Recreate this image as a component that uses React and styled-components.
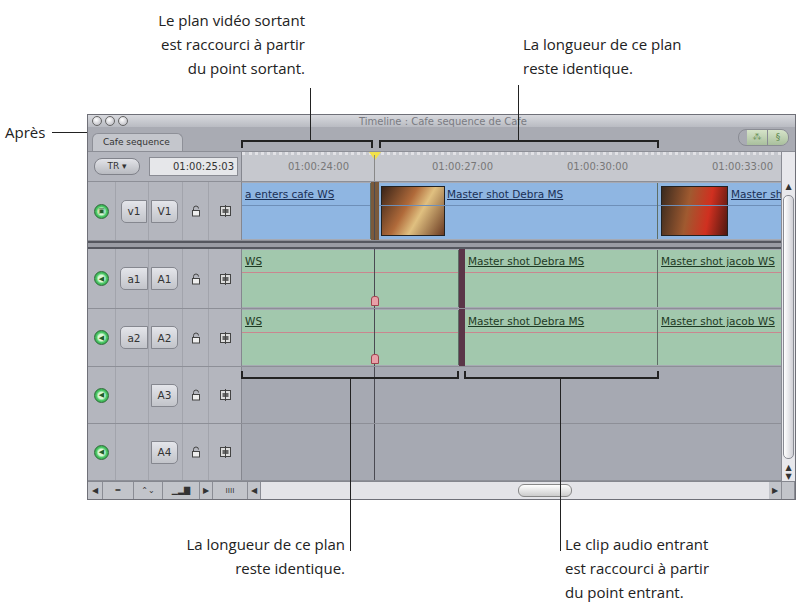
import React from 'react';
import styled, { createGlobalStyle } from 'styled-components';

const Global = createGlobalStyle`
  body { margin: 0; background: #fff; }
`;

const Page = styled.div`
  position: relative;
  width: 806px;
  height: 612px;
  padding: 114px 0 0 87px;
  box-sizing: border-box;
  font-family: "DejaVu Sans", Verdana, sans-serif;
`;

const Window = styled.div`
  width: 709px;
  height: 386px;
  background: #b6b8c0;
  border: 1px solid #6f7078;
  box-sizing: border-box;
  display: flex;
  flex-direction: column;
  overflow: hidden;
`;

const TitleBar = styled.div`
  height: 13px;
  display: flex;
  align-items: center;
  background: linear-gradient(#d8d9de, #b9bbc2);
  padding-left: 4px;
  gap: 3px;
`;
const Light = styled.span`
  width: 10px; height: 10px; border-radius: 50%;
  border: 1px solid #666; background: radial-gradient(circle at 40% 35%, #fff, #b0b0b8);
  box-sizing: border-box;
`;
const Title = styled.div`
  flex: 1; text-align: center; font-size: 10px; color: #7a7b82; margin-right: 40px;
`;

const TabRow = styled.div`
  height: 26px;
  display: flex;
  align-items: flex-end;
  justify-content: space-between;
  background: #a9abb3;
  padding: 0 6px 0 4px;
  border-bottom: 1px solid #8c8e96;
`;
const Tab = styled.div`
  height: 17px;
  padding: 0 12px 0 10px;
  font-size: 9px;
  line-height: 17px;
  color: #333;
  background: #c4c6cc;
  border: 1px solid #8e9098;
  border-bottom: none;
  border-radius: 6px 6px 0 0;
`;
const Toggles = styled.div`
  display: flex; margin-bottom: 5px;
  border: 1px solid #8a8c94; border-radius: 8px; overflow: hidden; height: 15px;
`;
const Toggle = styled.div`
  width: 20px; background: linear-gradient(#d6e4c9, #a9bf9d); border-left: 1px solid #8a8c94;
  color: #5f8a50; font-size: 9px; text-align: center; line-height: 15px;
  &:first-child { border-left: none; margin-left: 8px; }
`;

const Body = styled.div`
  flex: 1;
  display: flex;
`;
const Main = styled.div`
  width: 696px;
  display: flex;
  flex-direction: column;
`;
const Row = styled.div`
  height: ${p => p.h}px;
  display: flex;
  border-bottom: 1px solid #8d8f97;
  box-sizing: border-box;
`;
const Header = styled.div`
  width: 154px;
  display: grid;
  grid-template-columns: 28px 33px 34px 26px 33px;
  align-items: center;
  background: #b4b6be;
  border-right: 1px solid #85878f;
  box-sizing: border-box;
`;
const Cell = styled.div`
  height: 100%;
  display: flex; align-items: center; justify-content: center;
  border-right: 1px solid #a2a4ac;
`;
const Green = styled.span`
  width: 15px; height: 15px; border-radius: 50%;
  display: flex; align-items: center; justify-content: center;
  background: radial-gradient(circle, #d8f8d8 35%, #4cc866 55%, #23903c 95%);
  border: 1px solid #2f6f3a;
  box-sizing: border-box;
  font-size: 7px; color: #1f5f2a;
`;
const Patch = styled.div`
  height: 21px; padding: 0 6px; display: flex; align-items: center;
  font-size: 10.5px; color: #333;
  background: linear-gradient(#e4e5ea, #c2c4ca);
  border: 1px solid #85878f;
  border-radius: ${p => (p.left ? '5px 0 0 5px' : '0 5px 5px 0')};
  margin-left: ${p => (p.left ? '4px' : '-2px')};
`;
const Lane = styled.div`
  flex: 1;
  position: relative;
  background: #a6a9b2;
  overflow: hidden;
`;
const Clip = styled.div`
  position: absolute; top: 1px; bottom: 1px;
  background: ${p => (p.audio ? '#a2c8ad' : '#8fb6e2')};
  border-right: 1px solid #5e6e66;
  box-sizing: border-box;
  &::after {
    content: ''; position: absolute; left: 0; right: 0; top: 22px;
    height: 1px; background: ${p => (p.audio ? '#c9878f' : '#6e8fb8')};
  }
`;
const ClipName = styled.span`
  position: absolute; top: 5px; left: ${p => p.indent || 3}px;
  font-size: 10.5px; text-decoration: underline; white-space: nowrap;
  color: ${p => (p.audio ? '#1e3a24' : '#1a2f55')};
`;
const Thumb = styled.div`
  position: absolute; top: 3px; bottom: 3px;
  background: ${p => p.bg};
  border: 1px solid #222;
`;
const EditMark = styled.div`
  position: absolute; top: 0; bottom: 0; width: 6px;
  background: ${p => p.c};
`;
const Playhead = styled.div`
  position: absolute; top: 0; bottom: 0; left: 132px; width: 1px; background: #4a4a52;
`;
const Key = styled.div`
  position: absolute; bottom: 2px; left: 129px; width: 6px; height: 8px;
  border-radius: 3px 3px 0 0; background: #e8a0a8; border: 1px solid #a04450;
`;
const Ruler = styled.div`
  flex: 1; position: relative;
  background: #c6c8ce;
  border-top: 3px dotted #e2e2e6;
`;
const Time = styled.span`
  position: absolute; top: 6px; left: ${p => p.x}px;
  font-size: 10px; color: #777;
`;
const Head = styled.div`
  position: absolute; top: -3px; left: 127px;
  width: 0; height: 0; border-left: 6px solid transparent; border-right: 6px solid transparent;
  border-top: 8px solid #f2e24a;
`;
const TcBox = styled.div`
  grid-column: 3 / 6; height: 17px; margin-right: 4px;
  background: #e6e7ea; border: 1px solid #8a8c94;
  font-size: 10px; text-align: right; line-height: 17px; padding-right: 3px; color: #333;
`;
const Pill = styled.div`
  grid-column: 1 / 3; margin-left: 6px; height: 15px; width: 44px;
  border-radius: 8px; border: 1px solid #80828a; background: linear-gradient(#e2e3e8, #b8bac0);
  font-size: 9px; line-height: 15px; text-align: center; color: #333;
`;
const Sep = styled.div`
  height: 8px; background: #9a9ca4; border-top: 2px solid #55575f; border-bottom: 2px solid #55575f; box-sizing: border-box;
`;
const Scroll = styled.div`
  width: 13px; display: flex; flex-direction: column;
  background: #e8e8ec; border-left: 1px solid #8a8c94;
  padding-top: 30px; font-size: 8px; color: #333; align-items: center;
`;
const Thumbbar = styled.div`
  width: 9px; flex: 1; margin: 4px 0; border: 1px solid #8a8c94; border-radius: 5px;
  background: linear-gradient(90deg, #fff, #d0d0d6);
`;
const Bottom = styled.div`
  height: 18px; display: flex; align-items: center; background: #c2c4ca;
  border-top: 1px solid #85878f; font-size: 8px; color: #333;
`;
const BItem = styled.div`
  width: ${p => p.w}px; height: 100%; display: flex; align-items: center; justify-content: center;
  border-right: 1px solid #8a8c94;
`;
const HScroll = styled.div`
  flex: 1; height: 100%; display: flex; align-items: center; justify-content: center;
  background: #e4e4e8;
`;
const HThumb = styled.div`
  width: 52px; height: 11px; border-radius: 6px; border: 1px solid #888; background: linear-gradient(#fff, #ccc);
  margin-left: 60px;
`;

const Note = styled.div`
  position: absolute; left: ${p => p.x}px; top: ${p => p.y}px; width: 200px;
  text-align: ${p => p.align}; font-family: "Open Sans", "Noto Sans", sans-serif;
  font-size: 15px; line-height: 24px; color: #222;
`;
const VLine = styled.div`
  position: absolute; left: ${p => p.x}px; top: ${p => p.y}px; height: ${p => p.h}px;
  width: 1px; background: #222;
`;
const HLine = styled.div`
  position: absolute; left: ${p => p.x}px; top: ${p => p.y}px; width: ${p => p.w}px;
  height: 1px; background: #222;
`;
const Bracket = styled.div`
  position: absolute; left: ${p => p.x}px; top: ${p => p.y}px; width: ${p => p.w}px; height: 8px;
  border: 2px solid #222; box-sizing: border-box;
  ${p => (p.up ? 'border-top: none;' : 'border-bottom: none;')}
`;

const Lock = () => (
  <svg width="10" height="12" viewBox="0 0 10 12"><path d="M2.5 5V3.5a2.5 2.5 0 0 1 5 0" fill="none" stroke="#444" /><rect x="1.5" y="5.5" width="7" height="5.5" fill="#eee" stroke="#444" /></svg>
);
const Film = () => (
  <svg width="11" height="12" viewBox="0 0 11 12"><rect x="0.5" y="1.5" width="10" height="9" fill="#ddd" stroke="#444" /><rect x="2.5" y="4" width="6" height="4" fill="#666" /><line x1="5.5" y1="0" x2="5.5" y2="12" stroke="#444" /></svg>
);

const TrackHeader = ({ src, dst, video }) => (
  <Header>
    <Cell><Green>{video ? '▣' : '◀'}</Green></Cell>
    <Cell>{src && <Patch left>{src}</Patch>}</Cell>
    <Cell><Patch>{dst}</Patch></Cell>
    <Cell><Lock /></Cell>
    <Cell style={{ borderRight: 'none' }}><Film /></Cell>
  </Header>
);

const AudioLane = () => (
  <Lane>
    <Clip audio style={{ left: 0, width: 217 }}><ClipName audio>WS</ClipName></Clip>
    <EditMark c="#5a3648" style={{ left: 217 }} />
    <Clip audio style={{ left: 223, width: 193 }}><ClipName audio>Master shot Debra MS</ClipName></Clip>
    <Clip audio style={{ left: 416, width: 130 }}><ClipName audio>Master shot jacob WS</ClipName></Clip>
    <Playhead />
    <Key />
  </Lane>
);

export default function App() {
  return (
    <Page>
      <Global />
      <Window>
        <TitleBar>
          <Light /><Light /><Light />
          <Title>Timeline : Cafe sequence de Cafe</Title>
        </TitleBar>
        <TabRow>
          <Tab>Cafe sequence</Tab>
          <Toggles><Toggle>⁂</Toggle><Toggle>§</Toggle></Toggles>
        </TabRow>
        <Body>
          <Main>
            <Row h={30}>
              <Header>
                <Pill>TR ▾</Pill>
                <TcBox>01:00:25:03</TcBox>
              </Header>
              <Ruler>
                <Time x={46}>01:00:24:00</Time>
                <Time x={190}>01:00:27:00</Time>
                <Time x={325}>01:00:30:00</Time>
                <Time x={470}>01:00:33:00</Time>
                <Head />
                <Playhead style={{ background: '#888' }} />
              </Ruler>
            </Row>
            <Row h={59}>
              <TrackHeader video src="v1" dst="V1" />
              <Lane>
                <Clip style={{ left: 0, width: 129 }}><ClipName>a enters cafe WS</ClipName></Clip>
                <EditMark c="#7a5a3c" style={{ left: 129, width: 8 }} />
                <Clip style={{ left: 137, width: 279 }}>
                  <Thumb bg="linear-gradient(120deg,#3a2418,#b06a3a 40%,#e0c080 60%,#6a3a22)" style={{ left: 2, width: 62 }} />
                  <ClipName indent={68}>Master shot Debra MS</ClipName>
                </Clip>
                <Clip style={{ left: 416, width: 130 }}>
                  <Thumb bg="linear-gradient(100deg,#3a2a1e,#a05a30 40%,#d03020 70%,#501810)" style={{ left: 3, width: 65 }} />
                  <ClipName indent={73}>Master sh</ClipName>
                </Clip>
                <Playhead />
              </Lane>
            </Row>
            <Sep />
            <Row h={60}><TrackHeader src="a1" dst="A1" /><AudioLane /></Row>
            <Row h={58}><TrackHeader src="a2" dst="A2" /><AudioLane /></Row>
            <Row h={57}><TrackHeader dst="A3" /><Lane><Playhead /></Lane></Row>
            <Row h={57}><TrackHeader dst="A4" /><Lane><Playhead /></Lane></Row>
          </Main>
          <Scroll>
            ▲
            <Thumbbar />
            ▲<br />▼
          </Scroll>
        </Body>
        <Bottom>
          <BItem w={14}>◀</BItem>
          <BItem w={30}>═</BItem>
          <BItem w={28}>⌃⌄</BItem>
          <BItem w={36}>▁▂▇</BItem>
          <BItem w={12}>▶</BItem>
          <BItem w={34}>ıııı</BItem>
          <BItem w={12}>◀</BItem>
          <HScroll><HThumb /></HScroll>
          <BItem w={12}>▶</BItem>
          <BItem w={12} />
        </Bottom>
      </Window>

      <Note x={105} y={8} align="right">Le plan vidéo sortant<br />est raccourci à partir<br />du point sortant.</Note>
      <VLine x={310} y={88} h={54} />
      <Bracket x={241} y={140} w={132} />
      <Note x={523} y={32} align="left">La longueur de ce plan<br />reste identique.</Note>
      <VLine x={518} y={85} h={57} />
      <Bracket x={379} y={140} w={280} />
      <Note x={5} y={120} align="left">Après</Note>
      <HLine x={52} y={132} w={35} />

      <Bracket up x={241} y={371} w={218} />
      <Bracket up x={464} y={371} w={195} />
      <VLine x={350} y={379} h={172} />
      <VLine x={560} y={379} h={172} />
      <Note x={145} y={532} align="right">La longueur de ce plan<br />reste identique.</Note>
      <Note x={565} y={532} align="left">Le clip audio entrant<br />est raccourci à partir<br />du point entrant.</Note>
    </Page>
  );
}
